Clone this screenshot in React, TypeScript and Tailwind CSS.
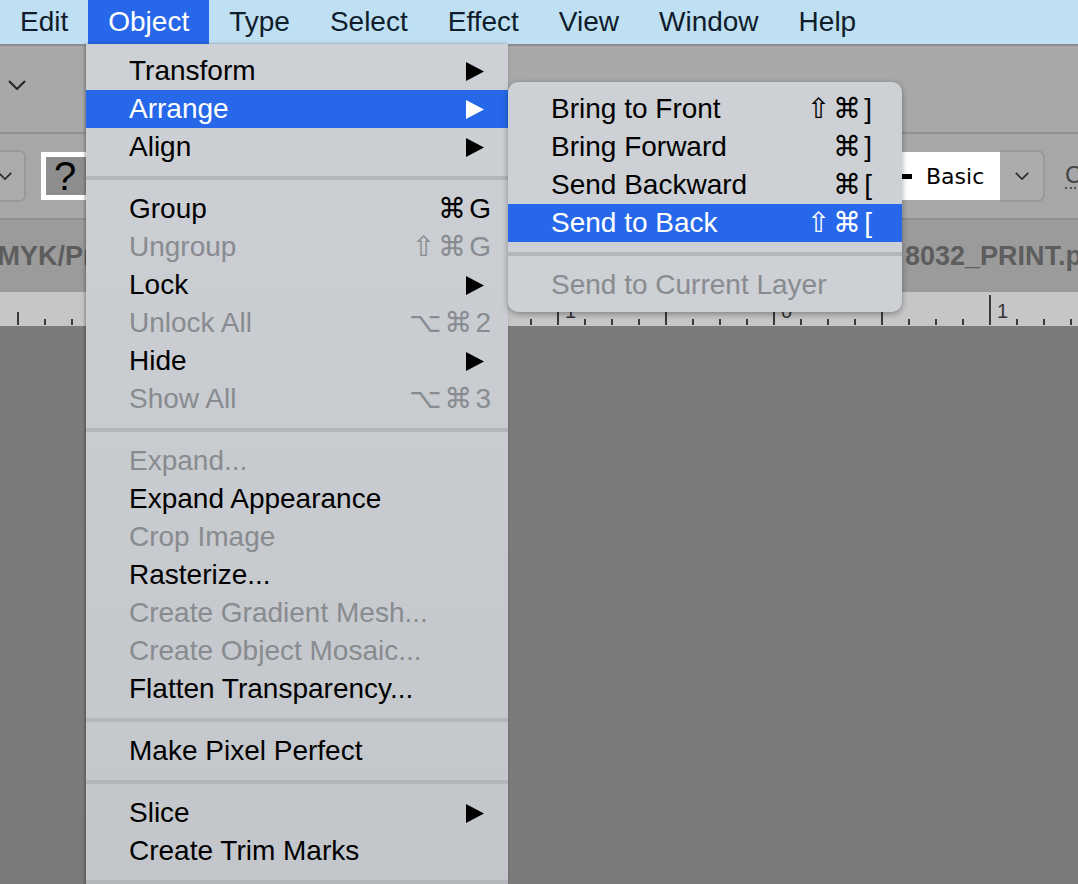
import { type ReactNode } from "react";

type Item =
  | { sep: true }
  | {
      sep?: false;
      label: string;
      shortcut?: string;
      arrow?: boolean;
      disabled?: boolean;
      active?: boolean;
    };

const objectMenu: Item[] = [
  { label: "Transform", arrow: true },
  { label: "Arrange", arrow: true, active: true },
  { label: "Align", arrow: true },
  { sep: true },
  { label: "Group", shortcut: "⌘G" },
  { label: "Ungroup", shortcut: "⇧⌘G", disabled: true },
  { label: "Lock", arrow: true },
  { label: "Unlock All", shortcut: "⌥⌘2", disabled: true },
  { label: "Hide", arrow: true },
  { label: "Show All", shortcut: "⌥⌘3", disabled: true },
  { sep: true },
  { label: "Expand...", disabled: true },
  { label: "Expand Appearance" },
  { label: "Crop Image", disabled: true },
  { label: "Rasterize..." },
  { label: "Create Gradient Mesh...", disabled: true },
  { label: "Create Object Mosaic...", disabled: true },
  { label: "Flatten Transparency..." },
  { sep: true },
  { label: "Make Pixel Perfect" },
  { sep: true },
  { label: "Slice", arrow: true },
  { label: "Create Trim Marks" },
  { sep: true },
  { label: "Text Wrap", arrow: true },
];

const arrangeMenu: Item[] = [
  { label: "Bring to Front", shortcut: "⇧⌘]" },
  { label: "Bring Forward", shortcut: "⌘]" },
  { label: "Send Backward", shortcut: "⌘[" },
  { label: "Send to Back", shortcut: "⇧⌘[", active: true },
  { sep: true },
  { label: "Send to Current Layer", disabled: true },
];

const menuBar = ["Edit", "Object", "Type", "Select", "Effect", "View", "Window", "Help"];

function Arrow({ white }: { white?: boolean }) {
  return (
    <svg width="18" height="19" viewBox="0 0 18 19" className="shrink-0">
      <polygon points="0,0 18,9.5 0,19" fill={white ? "#ffffff" : "#000000"} />
    </svg>
  );
}

function Chevron({ className }: { className?: string }) {
  return (
    <svg width="18" height="10" viewBox="0 0 18 10" className={className}>
      <polyline points="1,1 9,9 17,1" fill="none" stroke="#262626" strokeWidth="2" />
    </svg>
  );
}

function MenuRows({ items, shortcutPad }: { items: Item[]; shortcutPad: string }) {
  return (
    <>
      {items.map((it, i) => {
        if (it.sep) {
          return (
            <div key={i} className="py-[10px]">
              <div className="h-[4px] bg-[#b3b6ba]" />
            </div>
          );
        }
        const color = it.active
          ? "bg-[#2768ea] text-white"
          : it.disabled
            ? "text-[#888b8f]"
            : "text-black";
        return (
          <div key={i} className={`flex h-[38px] items-center pl-[43px] ${color}`}>
            <span className="whitespace-nowrap">{it.label}</span>
            {it.arrow ? (
              <span className="ml-auto pr-[24px]">
                <Arrow white={it.active} />
              </span>
            ) : null}
            {it.shortcut ? (
              <span className={`ml-auto tracking-[3px] whitespace-nowrap ${shortcutPad}`}>
                {it.shortcut}
              </span>
            ) : null}
          </div>
        );
      })}
    </>
  );
}

function Ruler() {
  const ticks: ReactNode[] = [];
  const labels: Record<number, string> = { 4: "3", 12: "2", 20: "1", 28: "0", 36: "1" };
  for (let k = 0; k < 40; k++) {
    const x = 18 + 27 * k;
    let top = 27;
    if (k % 8 === 0) top = 20;
    if (k % 8 === 4) top = 3;
    ticks.push(<line key={`t${k}`} x1={x} x2={x} y1={top} y2={33} stroke="#3a3a3a" strokeWidth="2" />);
    if (labels[k]) {
      ticks.push(
        <text key={`l${k}`} x={x + 7} y={26} fontSize="20" fill="#333333" fontFamily="Liberation Sans, sans-serif">
          {labels[k]}
        </text>
      );
    }
  }
  return (
    <div className="h-[34px] shrink-0 bg-[#c6c6c6]">
      <svg width="1078" height="34" viewBox="0 0 1078 34">
        {ticks}
      </svg>
    </div>
  );
}

export default function App() {
  return (
    <div className="relative h-[884px] w-[1078px] overflow-hidden bg-[#7b7b7b] [font-family:'Liberation_Sans','DejaVu_Sans',sans-serif]">
      <div className="flex h-full flex-col">
        {/* system menu bar */}
        <div className="flex h-[44px] shrink-0 items-stretch bg-[#bfe0f2] text-[28px] text-[#0f1d2c]">
          {menuBar.map((m) => (
            <div
              key={m}
              className={`flex items-center px-[20px] leading-none ${m === "Object" ? "bg-[#2768ea] text-white" : ""}`}
            >
              {m}
            </div>
          ))}
        </div>
        <div className="h-[2px] shrink-0 bg-[#8c8c8c]" />

        {/* control bar */}
        <div className="flex h-[86px] shrink-0 items-center bg-[#a8a8a8] pb-[8px] pl-[8px]">
          <Chevron />
        </div>
        <div className="h-[2px] shrink-0 bg-[#919191]" />

        {/* properties bar */}
        <div className="flex h-[84px] shrink-0 items-center overflow-hidden bg-[#a7a7a7]">
          <div className="-ml-[20px] flex h-[52px] w-[46px] shrink-0 items-center justify-end rounded-[7px] border-2 border-[#999999] bg-[#ababab] pr-[12px]">
            <Chevron className="h-[8px] w-[14px]" />
          </div>
          <div className="ml-[15px] flex h-[48px] w-[70px] shrink-0 items-center border-[5px] border-white bg-[#8e8e8e] pl-[8px] text-[40px] leading-none text-black">
            ?
          </div>
          <div className="ml-[749px] flex h-[48px] w-[140px] shrink-0 items-center bg-white">
            <div className="ml-[42px] h-[5px] w-[10px] bg-black" />
            <span className="ml-[14px] text-[22px] text-black [font-family:'DejaVu_Sans',sans-serif]">Basic</span>
          </div>
          <div className="flex h-[52px] w-[45px] shrink-0 items-center justify-center rounded-r-[7px] border-2 border-l-0 border-[#999999] bg-[#acacac]">
            <Chevron className="h-[8px] w-[14px]" />
          </div>
          <span className="ml-[20px] shrink-0 border-b-2 border-dotted border-[#555555] text-[24px] leading-none text-[#444444]">
            Ch
          </span>
        </div>
        <div className="h-[2px] shrink-0 bg-[#8f8f8f]" />

        {/* document tabs */}
        <div className="flex h-[72px] shrink-0 items-center overflow-hidden whitespace-nowrap bg-[#9b9b9b] text-[27px] font-bold text-[#5d5d5d]">
          <div className="w-[905px] shrink-0 overflow-hidden">
            <span className="-ml-[22px] inline-block">CMYK/Preview)</span>
          </div>
          <span className="shrink-0">8032_PRINT.pdf</span>
        </div>

        <Ruler />
        <div className="flex-1 bg-[#7b7b7b]" />
      </div>

      {/* Object menu */}
      <div className="absolute left-[86px] top-[44px] w-[422px] bg-gradient-to-b from-[#cdd0d4] to-[#c2c5c9] pt-[8px] text-[28px] leading-none shadow-[-1px_0_3px_rgba(0,0,0,0.35)]">
        <MenuRows items={objectMenu} shortcutPad="pr-[14px]" />
      </div>

      {/* Arrange submenu */}
      <div className="absolute left-[508px] top-[82px] w-[394px] overflow-hidden rounded-[10px] bg-[#cdd0d4] py-[8px] text-[28px] leading-none shadow-[0_2px_6px_rgba(0,0,0,0.35)]">
        <MenuRows items={arrangeMenu} shortcutPad="pr-[27px]" />
      </div>
    </div>
  );
}
